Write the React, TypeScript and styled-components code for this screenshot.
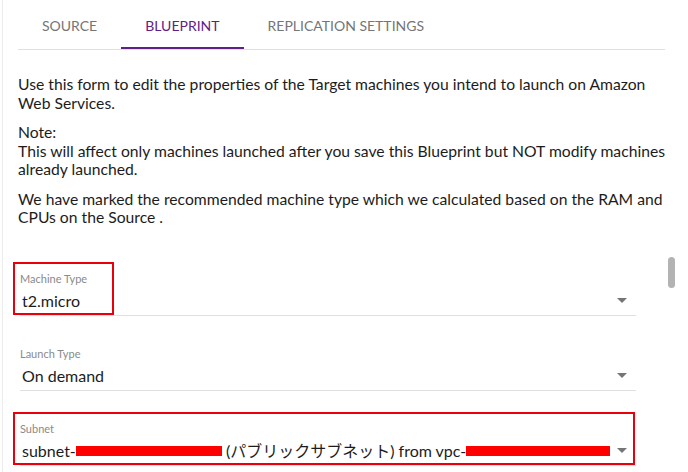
import React, { useState } from 'react';
import styled, { createGlobalStyle } from 'styled-components';

const GlobalStyle = createGlobalStyle`
  html, body {
    margin: 0;
    padding: 0;
    background: #fff;
    overflow: hidden;
  }
  body {
    font-family: Lato, "Noto Sans CJK JP", "Liberation Sans", sans-serif;
    color: #212121;
  }
`;

// Tarjeta principal con el borde tenue a la izquierda
const Card = styled.div`
  position: relative;
  margin-left: 2px;
  height: 472px;
  border-left: 1px solid #ececec;
  padding-left: 15px;
  box-sizing: border-box;
`;

const TabBar = styled.div`
  display: flex;
  width: 647px;
  height: 50px;
  border-bottom: 1px solid #e0e0e0;
  box-sizing: border-box;
`;

const Tab = styled.div<{ $active: boolean }>`
  display: flex;
  align-items: center;
  padding: 3px 24px 0;
  height: 49px;
  box-sizing: border-box;
  font-size: 14px;
  text-transform: uppercase;
  color: ${(p) => (p.$active ? '#5f2189' : '#757575')};
  border-bottom: 2px solid ${(p) => (p.$active ? '#5f2189' : 'transparent')};
  cursor: pointer;
`;

const Content = styled.div`
  width: 656px;
  padding-top: 25px;
`;

const Paragraph = styled.p`
  margin: 0 0 11px;
  font-size: 15.7px;
  line-height: 18.5px;
  color: #1c1c1c;
`;

const Form = styled.div`
  display: flex;
  flex-direction: column;
  gap: 15px;
  margin-top: 29px;
  padding-left: 2px;
  width: 616px;
`;

const Field = styled.div`
  position: relative;
  display: flex;
  flex-direction: column;
  height: 60px;
  padding-top: 16px;
  padding-bottom: 3px;
  box-sizing: border-box;
  border-bottom: 1px solid #e0e0e0;
`;

const Label = styled.div`
  font-size: 11px;
  line-height: 14px;
  color: #8a8a8a;
`;

const ValueRow = styled.div`
  display: flex;
  align-items: center;
  justify-content: space-between;
  margin-top: 4px;
  height: 22px;
  padding-left: 2px;
`;

const Value = styled.div`
  font-size: 16px;
  line-height: 22px;
  color: #1c1c1c;
  white-space: nowrap;
  overflow: hidden;
`;

const Arrow = styled.span`
  width: 0;
  height: 0;
  margin-right: 9px;
  border-left: 5px solid transparent;
  border-right: 5px solid transparent;
  border-top: 5px solid #757575;
`;

// Recuadro rojo de anotación encima del campo
const Highlight = styled.div<{ $width: number }>`
  position: absolute;
  left: -7px;
  top: 6px;
  width: ${(p) => p.$width}px;
  height: 53px;
  border: 2px solid #e8000b;
  box-sizing: border-box;
  pointer-events: none;
`;

const Redacted = styled.span<{ $width: number }>`
  display: inline-block;
  width: ${(p) => p.$width}px;
  height: 10px;
  background: #ff0000;
  vertical-align: middle;
  margin-top: -2px;
`;

const ScrollThumb = styled.div`
  position: absolute;
  left: 665px;
  top: 257px;
  width: 7px;
  height: 31px;
  border-radius: 4px;
  background: #b3b3b3;
`;

interface SelectFieldProps {
  label: string;
  highlight?: number;
  children: React.ReactNode;
}

function SelectField({ label, highlight, children }: SelectFieldProps) {
  return (
    <Field>
      <Label>{label}</Label>
      <ValueRow>
        <Value>{children}</Value>
        <Arrow />
      </ValueRow>
      {highlight ? <Highlight $width={highlight} /> : null}
    </Field>
  );
}

const tabs = ['Source', 'Blueprint', 'Replication Settings'];

export default function App() {
  const [activeTab, setActiveTab] = useState<number>(1);

  return (
    <>
      <GlobalStyle />
      <Card>
        <TabBar>
          {tabs.map((tab, index) => (
            <Tab key={tab} $active={index === activeTab} onClick={() => setActiveTab(index)}>
              {tab}
            </Tab>
          ))}
        </TabBar>
        <Content>
          <Paragraph>
            Use this form to edit the properties of the Target machines you intend to launch on Amazon Web Services.
          </Paragraph>
          <Paragraph>
            Note:
            <br />
            This will affect only machines launched after you save this Blueprint but NOT modify machines already
            launched.
          </Paragraph>
          <Paragraph>
            We have marked the recommended machine type which we calculated based on the RAM and CPUs on the Source .
          </Paragraph>
        </Content>
        <Form>
          <SelectField label="Machine Type" highlight={101}>
            t2.micro
          </SelectField>
          <SelectField label="Launch Type">On demand</SelectField>
          <SelectField label="Subnet" highlight={622}>
            subnet-
            <Redacted $width={146} /> (パブリックサブネット) from vpc-
            <Redacted $width={144} />
          </SelectField>
        </Form>
        <ScrollThumb />
      </Card>
    </>
  );
}
